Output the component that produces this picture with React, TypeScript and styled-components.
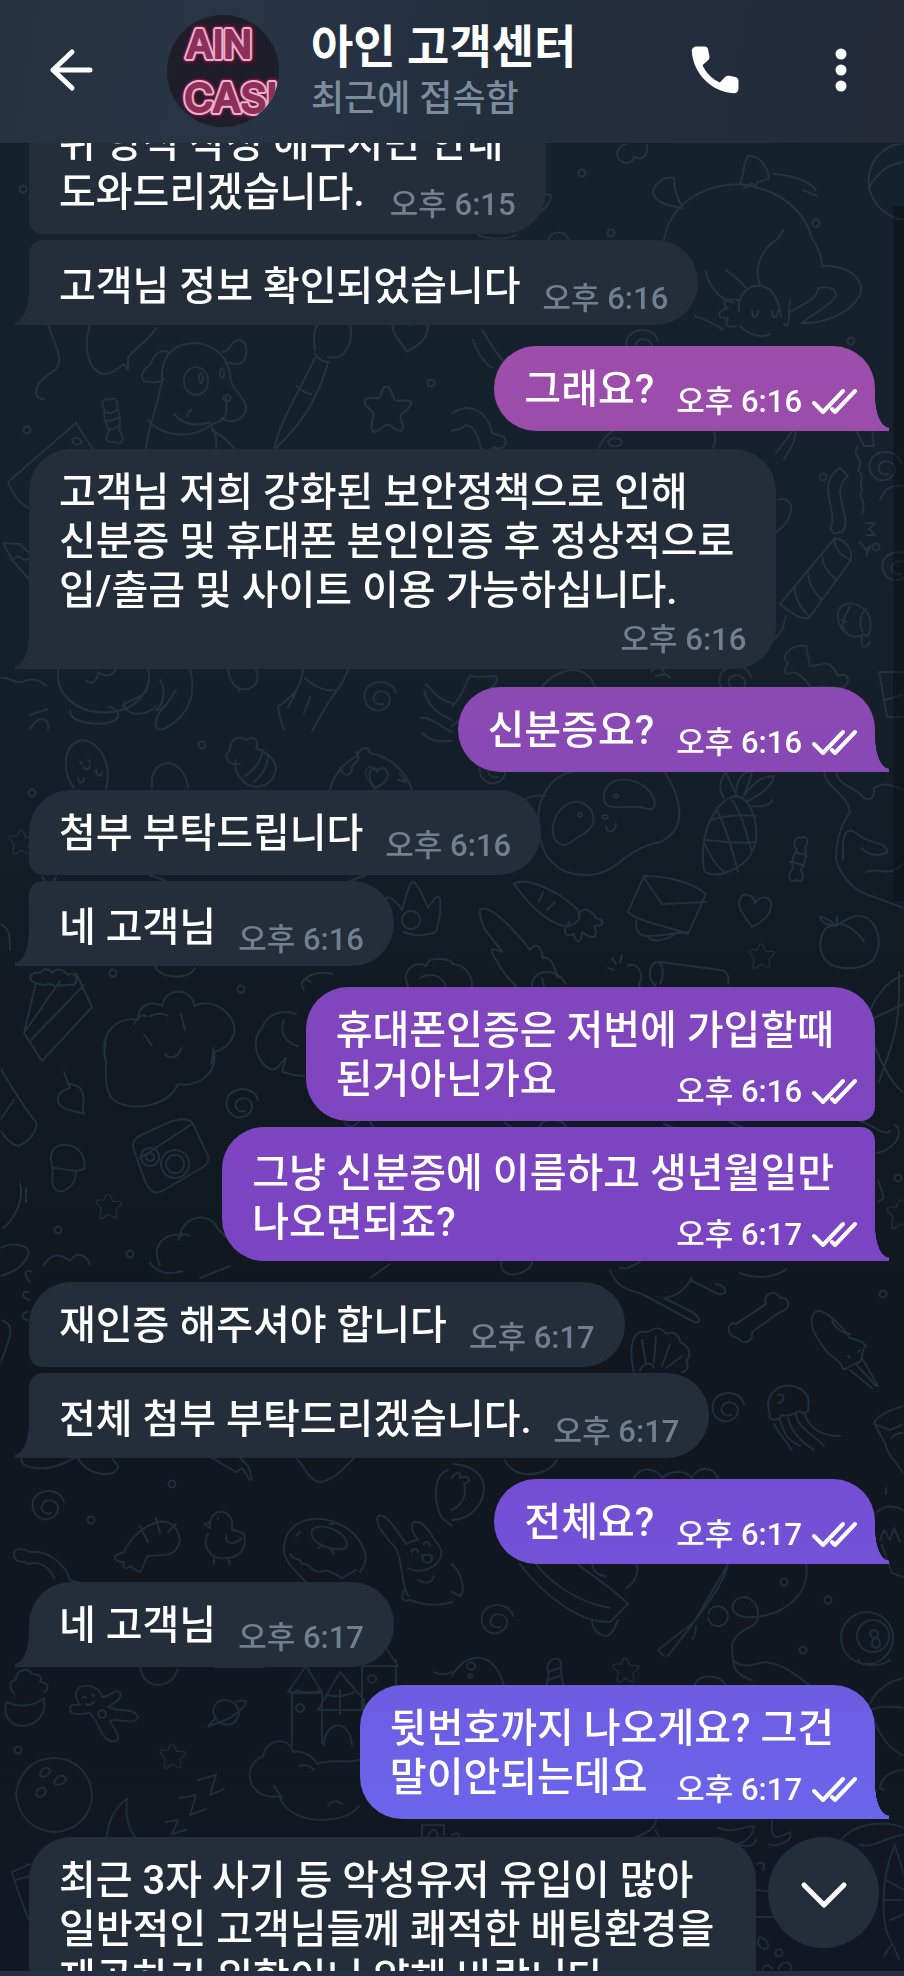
import React, { useLayoutEffect, useRef } from "react";
import styled, { createGlobalStyle, css } from "styled-components";

const GlobalStyle = createGlobalStyle`
  * { box-sizing: border-box; }
  html, body, #root { height: 100%; }
  body {
    margin: 0;
    background: #111a23;
    font-family: Roboto, "Noto Sans CJK KR", sans-serif;
    font-weight: 500;
    color: #fff;
  }
`;

const Screen = styled.div`
  display: flex;
  flex-direction: column;
  height: 100vh;
  overflow: hidden;
`;

const Header = styled.header`
  display: flex;
  align-items: center;
  flex: none;
  height: 143px;
  padding: 0 31px 2px 39px;
  background: linear-gradient(100deg, #25313f 0%, #283544 25%, #232e3d 55%, #232b39 100%);
`;

const IconButton = styled.button`
  display: flex;
  align-items: center;
  justify-content: center;
  width: 64px;
  height: 80px;
  padding: 0 0 2px;
  border: 0;
  background: none;
  color: #fff;
`;

const Avatar = styled.svg`
  flex: none;
  width: 112px;
  height: 112px;
  margin: 0 32px 0 64px;
  border-radius: 50%;
`;

const Peer = styled.div`
  flex: 1;
  min-width: 0;
  padding-top: 4px;
  white-space: nowrap;
`;

const PeerName = styled.h1`
  margin: 0;
  font-size: 46px;
  line-height: 52px;
  font-weight: 700;
`;

const PeerStatus = styled.p`
  margin: 0;
  font-size: 36px;
  line-height: 52px;
  color: #7b8d9d;
`;

const Actions = styled.div`
  display: flex;
  gap: 62px;
`;

const Body = styled.main`
  position: relative;
  flex: 1;
  min-height: 0;
  background: linear-gradient(180deg, #15212c 0%, #14202a 28%, #111a23 48%, #10171f 66%, #111823 100%);
`;

const Wallpaper = styled.svg`
  position: absolute;
  inset: 0;
  width: 100%;
  height: 100%;
`;

const Feed = styled.ol`
  position: relative;
  display: flex;
  flex-direction: column;
  height: 100%;
  margin: 0;
  padding: 0 29px 24px;
  list-style: none;
  overflow-y: auto;
  scrollbar-width: none;
`;

type Side = "in" | "out";

interface Placement {
  $side: Side;
  $joinsPrev?: boolean;
  $joinsNext?: boolean;
}

const Item = styled.li<Placement & { $first: boolean }>`
  display: flex;
  flex: none;
  justify-content: ${(p) => (p.$side === "out" ? "flex-end" : "flex-start")};
  margin-top: ${(p) => (p.$first ? 0 : p.$joinsPrev ? 6 : 18)}px;
  margin-bottom: ${(p) => (p.$joinsPrev ? 3 : 0)}px;
`;

const incomingFill = css`
  background: #232e3a;
`;

const outgoingFill = css`
  background: linear-gradient(180deg, #a04ea8 12%, #9c4dab 20%, #8a49b3 36%, #8046be 52%, #7a44c3 63%, #7350d5 77%, #6a65eb 92%) fixed;
`;

const tail = css<Placement>`
  &::after {
    content: "";
    position: absolute;
    bottom: 0;
    width: 14px;
    height: 34px;
    ${(p) => (p.$side === "out" ? outgoingFill : incomingFill)}
    ${(p) =>
      p.$side === "out"
        ? "right: -14px; mask: radial-gradient(14px 31px at 100% 0, transparent 97%, #000 100%);"
        : "left: -14px; mask: radial-gradient(14px 31px at 0 0, transparent 97%, #000 100%);"}
  }
`;

const radii = (p: Placement) => {
  const top = p.$joinsPrev ? 14 : 42;
  const bottom = p.$joinsNext ? 14 : 0;
  return p.$side === "out"
    ? `42px ${top}px ${bottom}px 42px`
    : `${top}px 42px 42px ${bottom}px`;
};

const Bubble = styled.article<Placement>`
  position: relative;
  padding: ${(p) => (p.$joinsPrev ? "22px" : "19px")} ${(p) => (p.$side === "out" ? 18 : 30)}px
    ${(p) => (p.$joinsPrev ? "14px" : "17px")} 30px;
  border-radius: ${radii};
  ${(p) => (p.$side === "out" ? outgoingFill : incomingFill)}
  ${(p) => !p.$joinsNext && tail}
`;

const Line = styled.p<{ $side: Side }>`
  margin: 0 ${(p) => (p.$side === "out" ? 23 : 12)}px 0 0;
  font-size: 40px;
  line-height: 49px;
`;

const LastLine = styled.div`
  display: flex;
  align-items: flex-end;
  justify-content: space-between;
  gap: 22px;
  font-size: 40px;
  line-height: 49px;
`;

const Meta = styled.span<{ $side: Side; $below?: boolean }>`
  display: flex;
  align-items: center;
  justify-content: flex-end;
  gap: 10px;
  margin: ${(p) => (p.$below ? 7 : 0)}px 0 -6px;
  font-size: 31px;
  line-height: 36px;
  white-space: nowrap;
  color: ${(p) => (p.$side === "out" ? "#fff" : "#71808f")};
`;

const ScrollThumb = styled.div`
  position: absolute;
  top: 63px;
  right: 0;
  width: 11px;
  height: 38%;
  background: rgba(8, 12, 18, 0.4);
`;

const ScrollDown = styled.button`
  position: absolute;
  right: 25px;
  bottom: 23px;
  display: flex;
  align-items: center;
  justify-content: center;
  width: 111px;
  height: 111px;
  padding: 4px 0 0;
  border: 0;
  border-radius: 50%;
  background: #232e3a;
  color: #fff;
`;

const BottomEdge = styled.footer`
  flex: none;
  height: 5px;
  background: #243042;
`;

interface Message {
  side: Side;
  lines: string[];
  time: string;
  joinsPrev?: boolean;
  joinsNext?: boolean;
  timeBelow?: boolean;
}

const messages: Message[] = [
  { side: "in", lines: ["위 양식 작성 해주시면 안내", "도와드리겠습니다."], time: "오후 6:15", joinsNext: true },
  { side: "in", lines: ["고객님 정보 확인되었습니다"], time: "오후 6:16", joinsPrev: true },
  { side: "out", lines: ["그래요?"], time: "오후 6:16" },
  {
    side: "in",
    lines: ["고객님 저희 강화된 보안정책으로 인해", "신분증 및 휴대폰 본인인증 후 정상적으로", "입/출금 및 사이트 이용 가능하십니다."],
    time: "오후 6:16",
    timeBelow: true,
  },
  { side: "out", lines: ["신분증요?"], time: "오후 6:16" },
  { side: "in", lines: ["첨부 부탁드립니다"], time: "오후 6:16", joinsNext: true },
  { side: "in", lines: ["네 고객님"], time: "오후 6:16", joinsPrev: true },
  { side: "out", lines: ["휴대폰인증은 저번에 가입할때", "된거아닌가요"], time: "오후 6:16", joinsNext: true },
  { side: "out", lines: ["그냥 신분증에 이름하고 생년월일만", "나오면되죠?"], time: "오후 6:17", joinsPrev: true },
  { side: "in", lines: ["재인증 해주셔야 합니다"], time: "오후 6:17", joinsNext: true },
  { side: "in", lines: ["전체 첨부 부탁드리겠습니다."], time: "오후 6:17", joinsPrev: true },
  { side: "out", lines: ["전체요?"], time: "오후 6:17" },
  { side: "in", lines: ["네 고객님"], time: "오후 6:17" },
  { side: "out", lines: ["뒷번호까지 나오게요? 그건", "말이안되는데요"], time: "오후 6:17" },
  {
    side: "in",
    lines: ["최근 3자 사기 등 악성유저 유입이 많아", "일반적인 고객님들께 쾌적한 배팅환경을", "제공하기 위함이니 양해 바랍니다"],
    time: "오후 6:17",
    timeBelow: true,
  },
];

const Checks = () => (
  <svg width="45" height="28" viewBox="0 0 45 28" fill="none" stroke="currentColor" strokeWidth="4" strokeLinecap="round" strokeLinejoin="round" aria-label="읽음">
    <path d="M2 15l9 9L31 3" />
    <path d="M20 21l3 3L43 3" />
  </svg>
);

const MessageRow = ({ message, first }: { message: Message; first: boolean }) => {
  const { side, lines, time, joinsPrev, joinsNext, timeBelow } = message;
  const full = timeBelow ? lines : lines.slice(0, -1);
  const meta = (
    <Meta $side={side} $below={timeBelow}>
      <time>{time}</time>
      {side === "out" && <Checks />}
    </Meta>
  );
  return (
    <Item $side={side} $joinsPrev={joinsPrev} $first={first}>
      <Bubble $side={side} $joinsPrev={joinsPrev} $joinsNext={joinsNext}>
        {full.map((line) => (
          <Line key={line} $side={side}>{line}</Line>
        ))}
        {timeBelow ? meta : (
          <LastLine>
            <span>{lines[lines.length - 1]}</span>
            {meta}
          </LastLine>
        )}
      </Bubble>
    </Item>
  );
};

const dots = [
  [23, 189], [582, 173], [611, 233], [816, 223], [27, 430], [431, 383], [851, 341], [823, 477], [876, 547],
  [202, 745], [32, 793], [113, 973], [241, 989], [58, 1230], [130, 1254], [898, 1178], [883, 1294], [784, 1582],
  [828, 1600], [803, 1650], [172, 1484], [91, 1520], [18, 1750], [779, 1953],
];
const spirals = [
  [380, 697], [642, 345], [735, 681], [885, 467], [495, 770], [242, 1104], [728, 1408], [48, 1506], [497, 1620], [898, 567],
];
const stars = [
  [388, 409, 1.1], [22, 842, 0.6], [762, 956, 0.6], [109, 1206, 0.6], [173, 1756, 0.6], [626, 1670, 0.6], [902, 1214, 0.7],
];
const hearts = [[409, 334, 1.1], [754, 911, 1], [376, 778, 0.7]];

const doodles = [
  // winged sleeping creature
  "M664 240C670 205 700 185 740 184C785 190 806 215 812 238C820 250 822 258 822 266M683 208C660 205 655 200 653 192C655 182 665 176 674 178C674 190 678 200 683 208M740 184C745 170 744 160 748 156C760 155 768 168 769 178C760 184 758 178 756 186C750 180 748 188 744 188M774 174C790 175 808 180 816 190M803 190l14 6",
  "M822 266C850 265 865 280 860 295C850 315 820 324 802 323C815 312 832 305 836 295C836 288 828 286 818 288C818 300 800 305 790 312M783 230c-2 4-4 10-10 12M772 243c-12 10-18 28-12 42M706 271c3 18 15 28 28 32M726 270c8 6 14 10 20 18M739 312c-2-20 12-28 22-26c14 2 18 18 20 30M738 300c-14-2-18 4-10 8c-14 4-10 12 0 10c-4 8 0 10 8 8M752 311c0 8 5 8 6 0M772 311c0 8 5 8 6 0M790 300c-2 20 0 30-6 24M695 316c10 4 18 6 28 14M740 326c10 10 22 12 30 8",
  "M904 143C880 145 866 165 869 188C874 208 890 218 904 220M869 188c8-16 20-24 35-26",
  "M628 143c-14 4-14 18-2 20c6 0 8-4 8-6c8 4 16-2 12-14M535 215c10-4 16-14 16-20c-6-2-10 0-12 6M478 235c14 6 30 4 38 0M549 240c0-8 14-12 20 0",
  // dog
  "M142 480C145 430 160 400 162 380C160 350 180 343 196 343C218 345 228 360 230 375C230 390 245 395 246 408C244 422 230 424 222 418M170 353c-10-6-16 2-20 12c-8 6-10 12-6 16c8 2 16 2 20-2M222 352c8 0 8-10 16-12c10 0 10 14 6 20c-4 6-10 4-18 2M174 414c10 12 24 12 36 8M187 416c2-4 2-6 4-6M148 420c14 16 40 20 62 6M210 424c8 10 6 20 6 26M212 430c12 6 18 14 24 20M226 398c0 12 4 22-14 26M223 398c2-4 6-4 8 0c-2 4-6 4-8 0",
  "M196 367a12 14 0 1 0 .1 0M201 373a2 5 0 1 0 .1 0M222 368a2 5 0 1 0 .1 0",
  "M48 325c8 22 16 34 8 44c-10 8-20 12-20 24c0 4 4 6 8 6M90 325C82 350 90 372 104 374c8 0 12-4 20-10l4 6v-12c6-10 20-16 28-30",
  // brush
  "M315 358C300 390 280 420 274 450M328 362C318 400 300 425 276 448M315 354c4 6 8 8 14 8M297 386c4 4 10 8 14 8M315 350c-4-22 4-30 12-38M350 325c4 20-6 36-22 32",
  // candies
  "M105 410c-6-8 0-12 4-10c4-4 10 0 8 8c4 8 4 14 2 22c4 6 6 12 0 13c-6-2-8 0-12-2c-2-4 2-8 2-12c-4-6-6-12-4-19M105 412c6 2 10 0 12-3M105 420c6 2 10 0 14-3M108 429c4 1 8 0 11-4",
  "M797 850c-6-8 0-14 4-12c6-4 8 4 4 10c2 8 0 14-4 22c4 8 0 14-4 10c-8 4-10-4-4-12c-2-6 0-12 4-18M797 853c6 2 8 0 10 3M790 862c6 0 10 2 14 4",
  // shoe and pencil
  "M8 482L76 423l10 16l7 10M8 482c4 12 12 22 21 26M72 440c4-4 8-2 10 2c-4 4-8 4-10-2M3 543l17 1l12 12M3 543l10 18l16 18M12 560l6-4l6 4l8-2",
  "M482 330c10 16 18 30 28 37c10 4 18-6 14-20M473 340c6 16 14 26 20 28M452 413c20-12 36 0 40 20l12 4c6 10-6 14-10 10c-4 6-16 4-14-4c-4-8-4-16-14-18c-6 6-12 4-14 6",
  "M776 453l18-24c4 0 0 10 0 12c-4 10-4 8-10 18M599 448c4-10 10-16 16-18M608 442c4-6 12-4 14 0c-2 6-12 6-14 0M712 449c4-6 4-12 2-18M856 430l8 16h10l-2-16",
  // rolled scarves and ribbons
  "M840 468l8 8c-20 16 6 40-6 56c-10 0-6 6-12-4c10-16-16-44 10-60M858 446c-8 12 8 10 0 24c8 6 0 14 4 20c-6 8 6 8 0 24M880 500c4-12 14-16 24-14M867 523h8l-6 6l6 6h-8M860 542l6 8l4-4l-4 10",
  "M835 538c10 2 18 10 16 22l-42 58c-8 2-16-4-29-14zM835 538c-2 10 6 18 16 22M822 553c0 12 6 20 14 26M808 570c0 14 6 22 14 30M795 588c0 12 6 20 14 28M786 616l-4 14l-8 10M778 500c10-4 16 6 12 14c-2 8-8 14-14 18",
  // fish
  "M838 612c4-14 26-10 32 6c2 14-2 22-6 16c-14 8-28-6-26-22M850 606c-2 6-10 14-6 24M867 608c-8 6-8 18-4 24M862 636c-2 12 4 14 8 6M842 620l4 2",
  "M788 664c-10-10 6-20 18-18l4 20c14 0 18-10 28 10c12-6 14 10 2 12c-16 0-16-4-28 0c-6-6-14-20-24-14c-4 0-4-6 0-10",
  "M879 672h25M879 672l8 45h17M885 700l19-6",
  // bear lower part
  "M58 669c-2 24 12 36 32 42c20 4 44 0 54-18c6-10 6-16 4-24M86 680c6 6 12 0 12-8c8 6 14 4 18-3M70 711c-2 14 48 18 48 4c0-6-6-8-10-8M124 702c0 16 24 14 32 4M147 690c-6 10-22 10-24 16M160 680c6 10 4 24-4 30c10 0 14-12 20-20M190 669c8 30-4 48-26 60c-14 4-8-14 0-22M0 678c10-2 12 6 22 4c12-6 20 0 24 4",
  "M30 729c10-16 20-10 18 0M30 715l18-6M228 669c2 14 8 22 20 20c12-4 10-12 8-20M240 689l-2 3M303 669c-2 24-16 30-25 38c2 12 4 18 6 22M348 669c-4 16-16 26-20 34l-16 28M305 678c10 10 24 14 30 12M296 692l-8 16M310 697l-6 16",
  "M426 685c2-4 6 14 26 18M424 690c4 20 20 26 28 30M421 718c10-2 24 12 31 14M452 706c10-8 14-24 18-30c10 2 18 0 26 0c4 10-8 10-10 18c0 16-22 22-34 32M540 690c10-18 46-34 56 0M651 672c6-8 12-4 14 2M656 676l10-2l4 4",
  // peanut, mushroom, cupcake
  "M74 788c-12-16-12-44 8-48c20 2 30 28 24 48M80 762l2 2M88 760l2 2M84 767c2 4 6 2 6-2M78 778c0 6 6 6 6 0M96 770c0 6 6 8 6 2M152 788c-4-32 32-34 36 0M240 764c-12 2-18-8-10-14c0-10 8-16 16-10c8-6 14 2 10 8c14 6 20 14 20 20c-2 20-24 24-34 12c-6-6-8-14-6-20M245 776c10-6 16-16 18-26M254 782c12-10 14-20 14-28",
  "M330 789c6-20 18-28 28-34c2-8 10-10 12-2c20 4 34 16 42 36M340 768c4 12 14 6 12-2c8-6 8-10 4-14M374 788c-8-14-4-22 2-18c10-6 14 4 10 10c-2 4-6 6-12 8M398 780l8 2l-6-8M422 733c10 10 18 8 30 8",
  // panda
  "M575 771C550 775 535 800 539 826C540 860 560 875 585 875C620 875 620 850 660 842C690 828 680 795 664 771M545 796c-12-2-20 2-26 8M554 838c-6-20 12-40 26-36c16 6 20 24 0 34c-10 6-16 16-26 2M604 795c2-22 40-20 50 4c4 14-8 10-14 8c-20-2-38 6-36-12M606 826c0 8 10 6 10-2",
  "M580 813a2 2 0 1 0 .1 0M616 794a2 2 0 1 0 .1 0M605 815a3 2 0 1 0 .1 0",
  // pineapple
  "M704 870c-6-40 14-72 32-74c18 2 26 40 16 56c-6 16-40 30-48 18M706 840c18 2 34 4 48 2M710 820c14-4 28-6 46-4M716 808c10 20 16 40 22 64M732 800c10 14 14 32 20 52M704 842c4 10 10 22 20 30M724 798c-10-14 4-28 2-26c4 10 8 18 10 22c0-20 14-24 16-22c-2 10-6 16-8 24c10-16 20-20 30-20c-2 12-20 22-28 26M752 806c10 2 20-2 20-6",
  // cat
  "M824 772c2 16 22 20 26 40c-10 14-14 30-14 48c6 20 20 30 30 34l38 14M836 772c4 16 16 12 28 26c10 4 10-4 10-10c10-6 14-4 30 2M843 844c2-20 10-14 20-6c10 6 24 4 24 14c-8 6-20 2-26-4M843 846v14M866 872c14-6 24 8 38-10",
  // carrot
  "M514 884c10-8 44 6 64 26c6 12-6 16-14 16c-20-4-40-28-50-42M543 892l-4 10M555 902l-8 8M578 914c8-10 16 0 18 4c10 2 8 8-2 8c6 12-2 14-12 6c0 14-8 10-8 2c-10 4-12-4-4-12",
  // envelope
  "M644 876l-16 36c10 10 40 14 60 22l18-40c-14-12-40-18-62-18M644 878l18 26l44-2M636 920c0 20 6 18 50 12M648 936c4 8 20 4 30-4",
  // feather and snake
  "M480 910c10-8 40 26 50 40c8-12 14 4 12 8c10-4 14 14 16 20M480 910c0 22 16 30 22 42c-16-6-12-2 0 18c4 6 8 10 14 16M532 986c-2-14 22-22 34-2M542 978l2 8M452 964c10 0 20 8 20 22M608 968l6 2M612 958l4 6M622 955l-2 8M628 966c10-6 16 10 12 16c-4 8 10 10 16 2M656 962c-8 4-8 16-2 22M660 962l60 8c6 0 10 6 8 14M658 962c6 4 6 16 2 22",
  // peach
  "M836 926c-16-2-18 20-14 28c6 20 50 18 54 0c8-16-2-40-20-38c-6 2-12 4-20 10M838 924c10 0 22 10 26 18M836 925c-6-4-10-8-16-8c2 8 10 8 16 8M837 916v8",
  "M904 975c-20 6-34 30-37 46c4 20 20 60 37 72M899 972v20c0 40-10 60-20 90M870 1020l34-16M895 1125c10 8 0 24-18 28M860 1121c10 2 24 16 30 10M878 1180l6 18l-6 4",
  // crown
  "M386 900c2-8 12 4 16 10c4-14 8-30 12-28c4 4 10 16 14 26c4-8 10-14 12-10c2 14-2 26-4 34c-12 4-24 4-32 0M411 911a9 9 0 1 0 .1 0M42 877c4 6 10 8 14 0M150 875l16 6M350 881l16-6M0 924c10 4 10 12 10 26",
  // popcorn
  "M36 983l-12 50l18 28l50-54l-16-34M24 1033l36-52M30 1041l54-56M36 983c-10-2-6-12 4-10c4-6 10-4 12 0c8-8 14 0 16 2c6-4 12 4 6 10c-6-2-8 2-14 0c-6 4-10-4-14 0c-4 0-6 0-10-2M155 966c6 14 34 14 40 2",
  // broccoli
  "M106 1060c-8-30 14-44 32-40c0-16 14-20 24-14c4-22 32-16 32 0c20-10 44 10 40 28c-4 12-12 16-20 18c4 24-20 36-36 32c-10 24-50 28-64 16c-10-8-8-26-8-40M134 1024c2-6 8-10 12-8M150 1016c6-2 12-4 18 0M181 1014l4 16M144 1034l8 12M165 1054c4 6 14 4 16-6M213 1048c0 8 0 10-2 16M106 1044c-2 6-2 12 0 18",
  "M304 980c8-8 20-8 28-6M304 990c-6-8 2-14 6-8M296 1014c-16-6-30 2-34 14c-10 10-8 30 6 40c8 4 8 0 18-10l-4 14c8 2 14 4 22 4M284 1020c-6 14 4 24 14 26M408 986c-8-18 10-26 18-20c2-10 20-8 26-4M420 978c10-6 20-4 26 8",
  // leaf and camera
  "M64 1072l6 16c-14 4-16 14-6 20c6 4 12 2 20 6c-4-8 4-14-4-26c-6-4-8-4-10-4M134 1150c-4-10 4-14 14-18c20-10 40-20 46-6l14 30c2 8-4 10-10 14l-34 20c-10 6-14 0-18-6zM140 1158l52-34M150 1148a9 9 0 1 0 .1 0M150 1153a4 4 0 1 0 .1 0M175 1150a14 14 0 1 0 .1 0M175 1155a9 9 0 1 0 .1 0",
  "M0 1068c10 16 24 40 36 54c2 10-10 22-18 24c-8-2-12-8-18-16M0 1120l14-20M52 1165c-4-14 4-22 16-20c14 2 18 16 16 24l-8 2c0 18-18 26-22 16c-4-6 0-12-2-22M54 1168l22 3M20 1184c4 14-4 34-17 44M26 1188v14",
  "M160 1265c-10-20 6-32 20-30c4-20 30-24 38-6l10 10M178 1240c4-8 8-6 12-4M0 1248c12-6 32-4 28 8c-6 12-14 16-28 20M44 1265c8-14 18-10 26-4c8-12 18-4 20 4",
  "M345 1123c4 6 10 4 14-2M370 1122l4 6M505 1123l6 4M540 1126c4-8 20-8 26 0M664 1124l10 4M730 1122l14 6",
  // flower and shapes between bubbles
  "M610 1270c8 20 20 20 32 24l52 28c10 2 4-8-6-12l-24-12c14-2 20-8 28-20M690 1280l28 14c10 2 10-8-2-10M740 1273c20 8 40 2 46-4M640 1262c-6 2-10 8-20 6M502 1261c-4 10 8 20 26 8c4-4 4-6 4-8",
  "M30 1282c-8-8-4-14 2-10M30 1300c-10-2-8-10-2-8M28 1320c-6 0-8-8 0-8M38 1352c-10 0-6-10 0-8M0 1320c14 4 14 10 0 44M150 1263c10 14 24 10 32 8M200 1278l30-12M370 1278l20-14",
  // bone
  "M736 1324l30-20c-4-10 10-16 14-6c10-2 12 12 0 14l-28 20c2 10-10 14-14 6c-14-2-10-18-2-14",
  // squid
  "M812 1318c4-20 30 8 38 20c8 2 14 4 16 8c-6 4-2 10-6 16c-10 2-14 10-18 6c0-8-12-10-18-20c-8-12-14-20-12-30M862 1358l16 28M856 1364l20 22M850 1370l22 18M832 1320c2 8 12 14 18 14M848 1356l2 2M858 1352l2-2",
  // shell
  "M634 1372c-6-24-2-44 14-40c8-6 14-4 18 2c8-4 14 2 14 8c10 4 12 14 6 18c4 6 0 12-4 12M642 1340l4 24M656 1336l-2 26M670 1344l-8 22M682 1356l-16 12M640 1370c4-8 12-8 14-2",
  // jellyfish
  "M770 1415c-8-22 12-34 26-28c12 4 14 14 12 20c2 6-6 8-8 4c-8 4-14 6-18 4c-4 8-16 4-12 0M778 1395c6-4 8 8 0 8M780 1420c6 20 10 20 20 26M788 1418c4 16 14 24 26 32M796 1414c2 14 12 16 28 32M804 1412c4 14 14 24 36 24M774 1424c4 8 14 20 18 26",
  "M904 1406c-10 2-24 8-30 16c4 12 10 14 14 30l16 22M874 1424l16 6l14-6M892 1438c4-6 8-4 12-6M886 1488v6",
  "M454 1464c20 2 30 12 30 24c0 16-14 32-32 32M452 1478c4-8 10-6 8 0c10-4 12 4 4 6c4 12-4 22-12 26M505 1460c6 18 40 20 52 0M634 1478c8-14 24-8 28 0c8-8 24-8 30 0c4-10 20-14 26 0",
  "M877 1512c10-10 26-4 27 0M880 1540l4-10l6 10l4-12l6 14M882 1545l10 28l12 4",
  // popsicles
  "M22 1458c-4 10 20 14 40 6c10-4 14-8 16-6c10 20 40 20 40 8l-6-8M212 1458l24 14l6-4l8 12c4 0 0-8-2-14l-8-8M296 1458c10 10 14 24 24 24c14-2 22-12 34-24",
  // croissant and sock
  "M14 1554c0-6 10-6 16-2c20-2 36 14 40 28l8 2M14 1556c2 8 10 4 14 8c12-4 22 4 26 14M116 1560c-4-6 4-6 8-8c10-24 50-48 56-12c-4 20-20 14-32 16c-4 4-4 12-8 16c-6-2-8-4-10-6c-4 4-8 2-6-4c-4 0-6 0-8-2M140 1526l8 16M156 1518l4 16M176 1524l-8 8",
  // chick
  "M210 1522l-6 2l6 4c-2-24 26-20 22 2c8 0 10 4 12 4c4 16-6 24-18 24c-18 2-24-14-18-24M226 1536c0 10 10 8 16 2M214 1558v6M228 1558l2 6M218 1518v1",
  // donut
  "M284 1550c0-36 44-40 70-16c12 14 16 26 6 38M284 1550c0 10 10 20 22 32M312 1530c10-10 40 4 34 18c-16 4-38-6-34-18M290 1554c4 8 10 2 12 10c8-2 8 8 18 8c10-4 12 2 22 6l14-8M318 1548c6-4 14 0 16 6M296 1536l4-4M330 1524h4",
  // bunny
  "M408 1596c-8-16-4-30-12-48c-10-10-22-24-18-32c8-4 20 16 28 28c4-2 10-4 12-4c-8-10-8-20 0-18c8 2 14 14 18 20c8 8 6 16 0 22c-8 8-22 8-28 4M412 1552c0-4 6-4 6 0M424 1544c2-4 6-2 6 2M422 1556c2 10 10 8 10 0c-4-2-6-2-10 0M404 1590c-4 10 0 12 6 10c16 6 30 6 42 2M418 1580c6 4 14 4 16-4M448 1470c-14 4-16 30-6 48l10 8",
  // boat
  "M520 1564c20 28 60 60 90 58l18-18c-20-20-40-30-50-40M592 1564c2 10 8 12 14 12M636 1564c4 8-2 20-10 24M610 1622l-18-2c0 10 8 16 14 16c8-2 10-12 12-16M536 1564c14 18 40 38 74 44M452 1564c10 10 14 26 8 32l-8-4",
  // fishing rod and line
  "M728 1564l-34 58l-36 28l6 6M728 1564c-4 20-20 40-60 92M708 1618a10 10 0 1 0 .1-4M692 1638c2 4 4-10 4-12M806 1564c6 30-24 50-44 52c-20 4-34-2-28-14c10-12 26 0 24 14c0 14-20 10-26 28c0 20 0 30 20 36",
  // eight ball
  "M867 1612a26 26 0 1 0 .1 0M873 1620a16 16 0 1 0 .1 0M874 1630a4 4 0 1 0 .1 0M876 1638a4 5 0 1 0 .1 0",
  "M452 1676c10-20 40-32 52 10M471 1662a4 4 0 1 0 .1 0M470 1674a2 2 0 1 0 .1 0M547 1685c0-8 4-10 0-18c4-12 16-10 14 0c0 8 0 10 2 18M548 1672l12-4M548 1680l12-4M695 1684c4-10 24-10 30 0M733 1660c10 10 20 4 32 2c18 2 30 12 44 23M858 1660c4 8 24 6 32 0",
  "M904 1678c-20 4-30 16-34 26M870 1710c10-4 24-4 34-2M876 1724c6 16 16 26 28 32M904 1770c-14 0-24 10-24 18l4 2",
  // cupcake and gingerbread
  "M6 1702c-4 18 8 24 18 24c14-2 22-12 20-26M14 1694c-6-8-4-14 2-14c0-12 14-12 16-6c10 0 10 6 8 8c8 0 10 8 4 10M6 1702c14 6 28 4 38-4M80 1705c-16-24 20-24 22-8c8 0 10-6 16-6c8 6-4 12-10 16c12 6 26 0 30 10c-4 10-20 0-28 4c4 8 12 16 6 20c-14 4-18-22-26-28c-6 0-20 4-20-4c0-6 6-4 10-4M82 1698c2-2 4-2 4 0M92 1694l2 2M86 1704c4 2 6 0 8-2M102 1710a4 4 0 1 0 .1 0",
  // planet
  "M213 1712c2-18 24-14 26 0c0 14-20 20-26 0M216 1718c-10 10-12 10 4 4c14-4 26-16 26-20c0-2-8-2-10 0M214 1667h50M140 1667c4 24 28 20 34 10l4-8",
  // bowling ball
  "M54 1758c-24 0-36 18-38 36c2 24 20 38 40 38c22-2 36-18 36-38c-2-22-18-36-38-36M40 1774c4-8 10-8 10-2c-4 6-10 6-10 2M54 1782c4-8 12-8 12-2c-4 6-12 6-12 2M36 1794c2-8 10-8 10-2c-2 6-10 6-10 2",
  // moon and sleep marks
  "M107 1837c2-24 14-34 20-38c-2 20 2 30 8 38M198 1780l18-5l-6 20l14-6M180 1798l16-3l-6 20l16-6M166 1822l12-2l-6 14l14-4",
  // castle
  "M292 1745v-52h30v50M288 1692l18-26l16 26zM324 1745c0-24 26-28 28 0M318 1710l22-38l24 28v10zM362 1666v44M396 1660v40M362 1666h36l-12-18M296 1690c8 4 16 4 26 0M326 1694c10 4 20 2 28-2M300 1704a4 4 0 1 0 .1 0M340 1690v24M372 1675a4 4 0 1 0 .1 0",
  "M359 1806c-14 20-70 20-80-10c-30 6-40-30-16-40c4-18 26-20 30-4c10-2 20 4 24 12c14-6 30 0 42-4M274 1786l8 12M300 1766c6-2 10 0 14 4M328 1806c4-6 10-6 14-2M434 1672c6 4 14 2 18 0",
  "M12 1872l18-8M12 1872c4 16 10 30 17 48M16 1880l14-4M422 1837v-12h22v10M428 1836c4-8 8-8 10 0M656 1819c0 10-10 14-20 18M655 1830l4 7M718 1828c16 6 26-2 36-2c-2 16-16 18-28 22M772 1820c-2 20 4 20 18 12c4 10-16 16-22 12M756 1840c-4 10-12 4-18 6M452 1835c6-4 8 0 6 2",
  "M841 1840c10-14 40-22 63-12M860 1845c14 4 30-10 44-10M895 1845c-14 30-16 80-2 100l6 14M895 1845l9 30M886 1880l18 10M884 1900h20M890 1920l14-6M884 1956l8-12M757 1890c10 2 14 2 16 0M757 1917h18M757 1864c8-4 8 2 6 6M760 1937c10 4 10 12 4 12c-6-2-8-8-4-12M762 1971c2-10 12-4 10 0M778 1971c2-14 18-8 12 0",
];

const WallpaperDoodles = () => (
  <Wallpaper viewBox="0 143 904 1828" preserveAspectRatio="xMidYMin slice" fill="none" stroke="#253440" strokeWidth="2" strokeLinecap="round" strokeLinejoin="round" aria-hidden="true">
    <defs>
      <path id="star" d="M-3-20c4-2 6 4 9 12c5 2 16-2 15 3c-2 6-7 8-10 11c1 5 5 13 0 14c-6-1-8-6-12-6c-5 2-9 9-13 6c-3-5 1-11 1-16c-3-4-10-8-8-12c3-4 9-1 13-2c2-4 2-8 5-10z" />
      <path id="heart" d="M-2 16C-8 6-18-2-14-12C-10-20 0-16 1-8C6-16 18-16 17-4C16 6 6 12-2 16z" />
      <path id="spiral" d="M3 7C-3 9-8 4-6-1C-3-8 8-7 10 1C11 10 0 16-8 12C-18 6-18-8-8-13C2-18 14-13 16-4" />
      <linearGradient id="fade" x1="0" y1="0" x2="0" y2="1">
        <stop offset="0" stopColor="#fff" />
        <stop offset="1" stopColor="#bbb" />
      </linearGradient>
      <mask id="dim" maskUnits="userSpaceOnUse" x="0" y="143" width="904" height="1828">
        <rect x="0" y="143" width="904" height="1828" fill="url(#fade)" />
      </mask>
    </defs>
    <g mask="url(#dim)">
      {dots.map(([x, y]) => <circle key={`${x}-${y}`} cx={x} cy={y} r="3.5" />)}
      {spirals.map(([x, y]) => <use key={`${x}-${y}`} href="#spiral" x={x} y={y} />)}
      {stars.map(([x, y, s]) => <use key={`${x}-${y}`} href="#star" transform={`translate(${x} ${y}) scale(${s})`} />)}
      {hearts.map(([x, y, s]) => <use key={`${x}-${y}`} href="#heart" transform={`translate(${x} ${y}) scale(${s})`} />)}
      {doodles.map((d) => <path key={d} d={d} />)}
    </g>
  </Wallpaper>
);

const neonLayers = [
  { stroke: "#4a1230", width: 14, opacity: 0.4 },
  { stroke: "#7a1f4b", width: 9, opacity: 0.7 },
  { stroke: "#efb0cb", width: 6, opacity: 1 },
  { stroke: "#8c3059", width: 2, opacity: 1 },
];

const NeonAvatar = () => (
  <Avatar viewBox="0 0 112 112" role="img" aria-label="AIN CASINO">
    <rect width="112" height="112" fill="#1f1f29" />
    <g fontFamily="Inter, sans-serif" fontWeight="500" strokeLinejoin="round">
      {neonLayers.map((layer) => (
        <g key={layer.width} fill="#8c3059" stroke={layer.stroke} strokeWidth={layer.width} opacity={layer.opacity}>
          <text x="19" y="43" fontSize="38">AIN</text>
          <text x="17" y="97" fontSize="40">CASI</text>
        </g>
      ))}
    </g>
  </Avatar>
);

const SCROLL_START = 43;

export default function App() {
  const feed = useRef<HTMLOListElement>(null);

  useLayoutEffect(() => {
    if (feed.current) feed.current.scrollTop = SCROLL_START;
  }, []);

  return (
    <Screen>
      <GlobalStyle />
      <Header>
        <IconButton type="button" aria-label="뒤로">
          <svg width="46" height="44" viewBox="0 0 46 44" fill="none" stroke="currentColor" strokeWidth="5" strokeLinecap="round" strokeLinejoin="round">
            <path d="M42 22H5M24 4L5 22l19 18" />
          </svg>
        </IconButton>
        <NeonAvatar />
        <Peer>
          <PeerName>아인 고객센터</PeerName>
          <PeerStatus>최근에 접속함</PeerStatus>
        </Peer>
        <Actions>
          <IconButton type="button" aria-label="통화">
            <svg width="64" height="64" viewBox="0 0 24 24" fill="currentColor">
              <path d="M5.2 3.2h2.9c.7 0 1.2.4 1.3 1.1l.5 2.5c.1.6-.1 1.1-.5 1.5L7.3 10.2c1.4 2.9 3.6 5.1 6.5 6.500l2-2.1c.4-.4.9-.5 1.5-.4l2.3.4c.7.1 1.2.7 1.2 1.4v3c0 1-.8 1.8-1.8 1.7C10.7 20.3 3.800 13.300 3.300 5c-.1-1 .8-1.800 1.900-1.800z" />
            </svg>
          </IconButton>
          <IconButton type="button" aria-label="더보기">
            <svg width="12" height="44" viewBox="0 0 12 44" fill="currentColor">
              <circle cx="6" cy="6" r="5.5" />
              <circle cx="6" cy="22" r="5.5" />
              <circle cx="6" cy="38" r="5.5" />
            </svg>
          </IconButton>
        </Actions>
      </Header>
      <Body>
        <WallpaperDoodles />
        <Feed ref={feed}>
          {messages.map((message, index) => (
            <MessageRow key={index} message={message} first={index === 0} />
          ))}
        </Feed>
        <ScrollThumb />
        <ScrollDown type="button" aria-label="맨 아래로">
          <svg width="48" height="28" viewBox="0 0 48 28" fill="none" stroke="currentColor" strokeWidth="5" strokeLinecap="round" strokeLinejoin="round">
            <path d="M4 4l20 20L44 4" />
          </svg>
        </ScrollDown>
      </Body>
      <BottomEdge />
    </Screen>
  );
}
